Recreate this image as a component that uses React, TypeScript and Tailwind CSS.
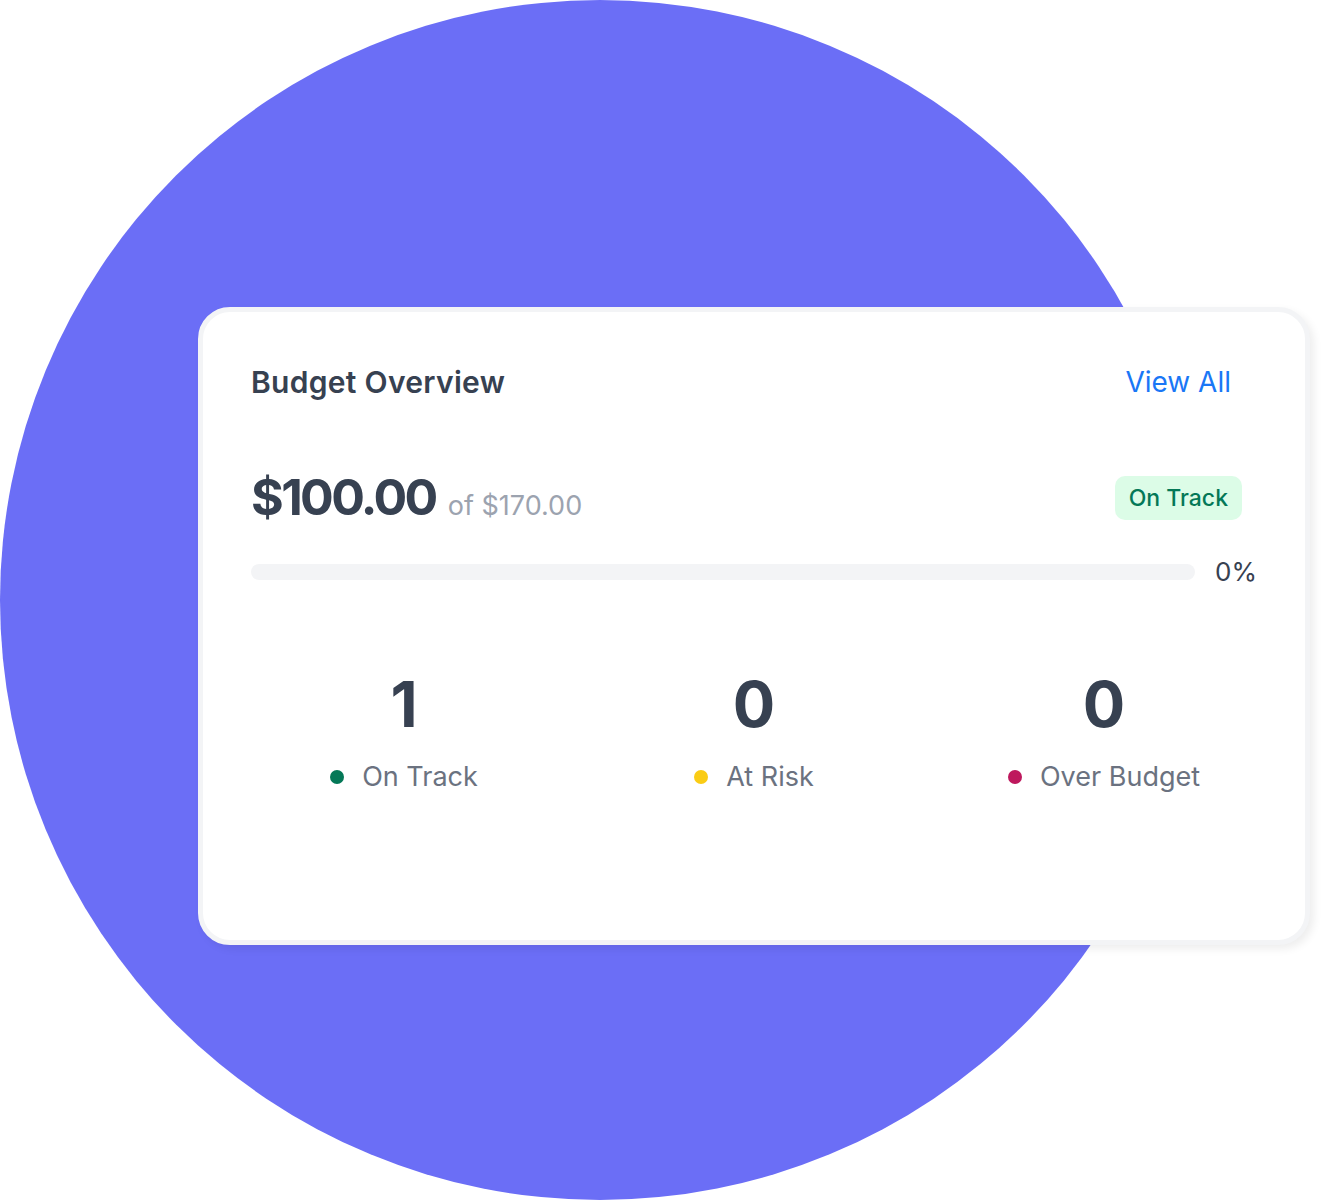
import React from "react";

export default function App() {
  const stats = [
    { n: "1", label: "On Track", dot: "bg-[#047857]" },
    { n: "0", label: "At Risk", dot: "bg-[#facc15]" },
    { n: "0", label: "Over Budget", dot: "bg-[#be185d]" },
  ];
  return (
    <div className="relative w-[1322px] h-[1200px] overflow-hidden bg-white" style={{ fontFamily: "Inter, 'Liberation Sans', sans-serif" }}>
      <div className="absolute left-0 top-0 w-[1200px] h-[1200px] rounded-full bg-[#6b6ef6]" />
      <div className="absolute left-[198px] top-[307px] w-[1112px] h-[638px] rounded-[32px] border-[5px] border-[#f3f4f6] bg-white shadow-[4px_4px_8px_rgba(0,0,0,0.07)] flex flex-col px-[48px] pt-[52px]">
        <div className="flex items-center justify-between h-[36px]">
          <div className="text-[30px] leading-[36px] font-semibold text-[#374151] tracking-[0.3px]">Budget Overview</div>
          <div className="text-[28px] leading-[36px] text-[#1a77f6] mr-[26px]">View All</div>
        </div>
        <div className="flex items-end justify-between mt-[74px] h-[52px]">
          <div className="flex items-baseline gap-[12px]">
            <span className="text-[50px] leading-[52px] font-bold text-[#374151] tracking-[-2.6px]">$100.00</span>
            <span className="text-[27px] text-[#9ca3af]">of $170.00</span>
          </div>
          <div className="mr-[15px] mb-[6px] rounded-[10px] bg-[#dcfce7] text-[#047857] text-[23px] leading-[44px] h-[44px] px-[14px] font-medium">On Track</div>
        </div>
        <div className="flex items-center mt-[26px] gap-[20px]">
          <div className="flex-1 h-[16px] rounded-full bg-[#f3f4f6]" />
          <div className="text-[26px] text-[#374151]">0%</div>
        </div>
        <div className="grid grid-cols-3 w-[1050px] self-center mt-[82px]">
          {stats.map((s, i) => (
            <div key={i} className="flex flex-col items-center">
              <div className="text-[63px] leading-[62px] font-bold text-[#374151]">{s.n}</div>
              <div className="flex items-center gap-[18px] mt-[22px]">
                <span className={`w-[14px] h-[14px] rounded-full ${s.dot}`} />
                <span className="text-[27px] text-[#6b7280]">{s.label}</span>
              </div>
            </div>
          ))}
        </div>
      </div>
    </div>
  );
}
